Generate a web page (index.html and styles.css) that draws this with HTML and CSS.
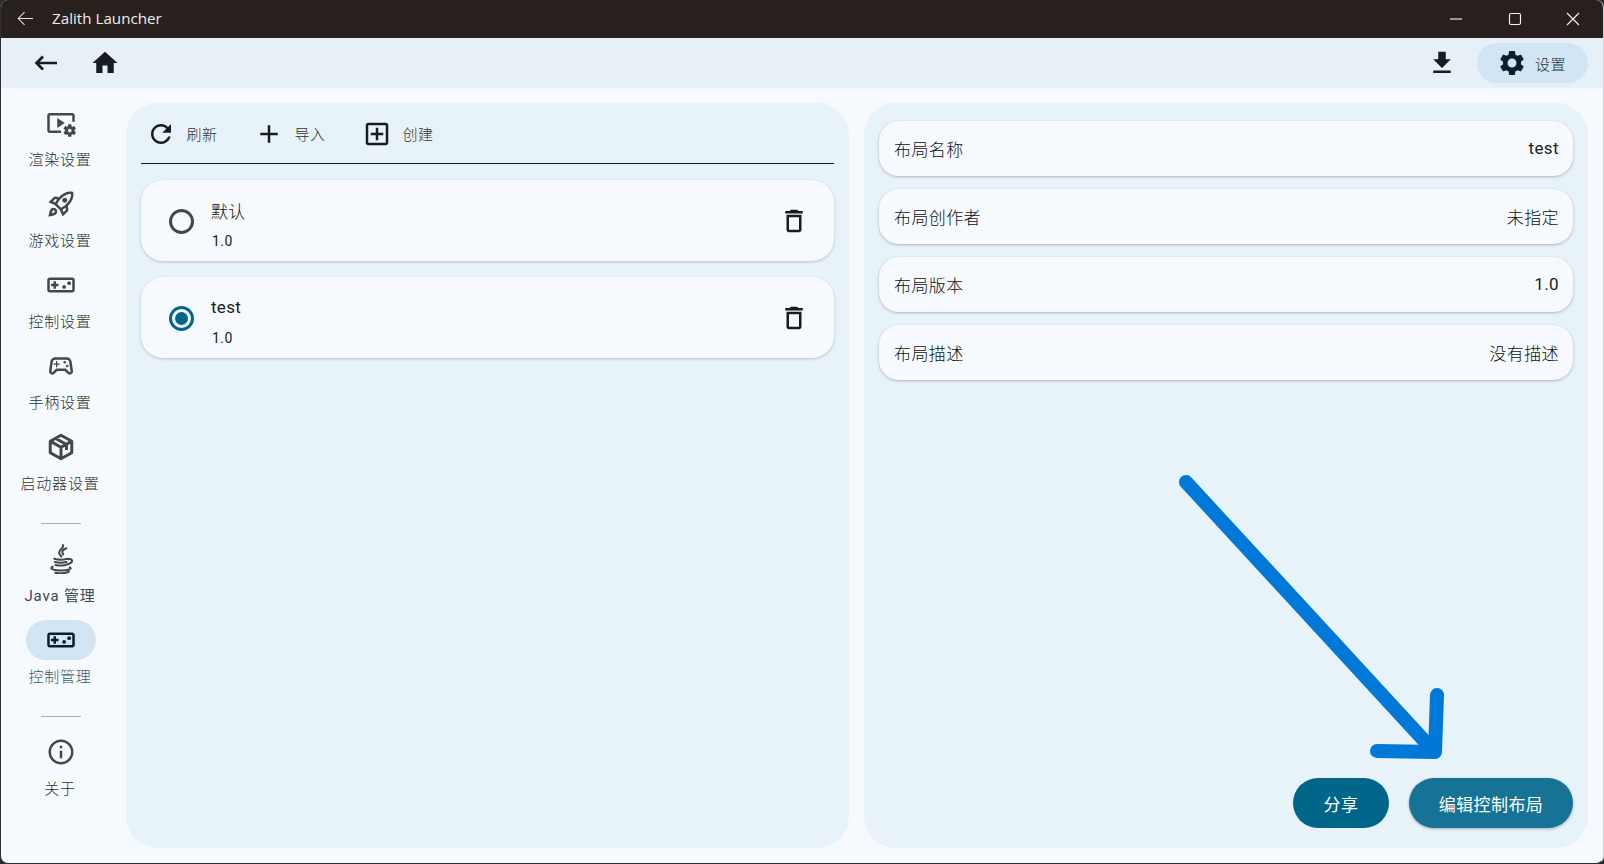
FILE: index.html
```html
<!DOCTYPE html>
<html lang="zh">
<head>
<meta charset="utf-8">
<title>Zalith Launcher</title>
<link rel="stylesheet" href="styles.css">
</head>
<body>
<div class="window">
  <header class="titlebar">
    <svg class="tb-back" viewBox="0 0 18 16"><path d="M17 8H1.5M8 1.2 1.2 8 8 14.8"/></svg>
    <span class="tb-title">Zalith Launcher</span>
    <div class="tb-controls">
      <svg class="tb-ctl" viewBox="0 0 14 14"><path d="M1 7h12"/></svg>
      <svg class="tb-ctl" viewBox="0 0 14 14"><rect x="1.5" y="1.5" width="11" height="11" rx="1.5"/></svg>
      <svg class="tb-ctl" viewBox="0 0 14 14"><path d="M1 1l12 12M13 1 1 13"/></svg>
    </div>
  </header>

  <div class="topbar">
    <svg class="back" viewBox="0 0 24 16"><path d="M23 8H2.5M9 1.5 2.5 8 9 14.5"/></svg>
    <svg class="icon home" viewBox="0 0 24 24"><path d="M10 20v-6h4v6h5v-8h3L12 3 2 12h3v8z"/></svg>
    <div class="spacer"></div>
    <svg class="icon download" viewBox="0 0 24 24"><path d="M19 9h-4V3H9v6H5l7 7 7-7zM5 18v2h14v-2H5z"/></svg>
    <div class="settings-pill">
      <svg class="icon" viewBox="0 0 24 24"><path d="M19.14 12.94c.04-.3.06-.61.06-.94 0-.32-.02-.64-.07-.94l2.03-1.58c.18-.14.23-.41.12-.61l-1.92-3.32c-.12-.22-.37-.29-.59-.22l-2.39.96c-.5-.38-1.03-.7-1.62-.94l-.36-2.54c-.04-.24-.24-.41-.48-.41h-3.84c-.24 0-.43.17-.47.41l-.36 2.54c-.59.24-1.13.57-1.62.94l-2.39-.96c-.22-.08-.47 0-.59.22L2.74 8.87c-.12.21-.08.47.12.61l2.03 1.58c-.05.3-.09.63-.09.94s.02.64.07.94l-2.03 1.58c-.18.14-.23.41-.12.61l1.92 3.32c.12.22.37.29.59.22l2.39-.96c.5.38 1.03.7 1.62.94l.36 2.54c.05.24.24.41.48.41h3.84c.24 0 .44-.17.47-.41l.36-2.54c.59-.24 1.13-.56 1.62-.94l2.39.96c.22.08.47 0 .59-.22l1.92-3.32c.12-.22.07-.47-.12-.61l-2.01-1.58zM12 15.6c-1.98 0-3.6-1.62-3.6-3.6s1.62-3.6 3.6-3.6 3.6 1.62 3.6 3.6-1.62 3.6-3.6 3.6z"/></svg>
      <span>设置</span>
    </div>
  </div>

  <div class="main">
    <nav class="sidebar">
      <div class="nav-item">
        <div class="nav-pill"><svg class="icon" viewBox="0 0 24 24"><path d="M3 6h18v5h2V6c0-1.1-.9-2-2-2H3c-1.1 0-2 .9-2 2v12c0 1.1.9 2 2 2h9v-2H3V6z"/><path d="M15 12 9 8v8z"/><path d="M22.71 18.43c.03-.29.04-.58.01-.86l1.07-.85c.1-.08.12-.21.06-.32l-1.03-1.79c-.06-.11-.19-.15-.31-.11l-1.28.5c-.23-.17-.48-.31-.75-.42l-.2-1.36c-.02-.13-.13-.22-.25-.22h-2.07c-.12 0-.23.09-.25.21l-.2 1.36c-.26.11-.51.26-.74.42l-1.28-.5c-.12-.05-.25 0-.31.11l-1.03 1.79c-.06.11-.04.24.06.32l1.07.86c-.03.29-.04.58-.01.86l-1.07.85c-.1.08-.12.21-.06.32l1.03 1.79c.06.11.19.15.31.11l1.27-.5c.23.17.48.31.75.42l.2 1.36c.02.12.12.21.25.21h2.07c.12 0 .23-.09.25-.21l.2-1.36c.26-.11.51-.26.74-.42l1.28.5c.12.05.25 0 .31-.11l1.03-1.79c.06-.11.04-.24-.06-.32l-1.06-.85zM19 19.5c-.83 0-1.5-.67-1.5-1.5s.67-1.5 1.5-1.5 1.5.67 1.5 1.5-.67 1.5-1.5 1.5z"/></svg></div>
        <span class="nav-label">渲染设置</span>
      </div>
      <div class="nav-item">
        <div class="nav-pill"><svg class="icon" viewBox="0 0 24 24"><path d="M6 15c-.83 0-1.58.34-2.12.88C2.7 17.06 2 22 2 22s4.94-.7 6.12-1.88c.54-.54.88-1.29.88-2.12 0-1.66-1.34-3-3-3zm.71 3.71c-.28.28-2.17.76-2.17.76s.47-1.88.76-2.17c.17-.19.42-.3.7-.3.55 0 1 .45 1 1 0 .28-.11.53-.29.71zm10.71-5.06c6.36-6.36 4.24-11.31 4.24-11.31S16.71.22 10.35 6.58l-2.49-.5c-.65-.13-1.33.08-1.81.55L2 10.69l5 2.14L11.17 17l2.14 5 4.05-4.05c.47-.47.68-1.15.55-1.8l-.49-2.5zM7.41 10.83l-1.91-.82 1.97-1.97 1.44.29c-.57.83-1.08 1.7-1.5 2.5zm6.58 7.67l-.82-1.91c.8-.42 1.67-.93 2.49-1.5l.29 1.44-1.96 1.97zM16 12.24c-1.32 1.32-3.38 2.4-4.04 2.73l-2.93-2.93c.32-.65 1.4-2.71 2.73-4.04 4.68-4.68 8.23-3.91 8.23-3.91s.69 3.55-3.99 8.15zM15 11c1.1 0 2-.9 2-2s-.9-2-2-2-2 .9-2 2 .9 2 2 2z"/></svg></div>
        <span class="nav-label">游戏设置</span>
      </div>
      <div class="nav-item">
        <div class="nav-pill"><svg class="icon" viewBox="0 0 24 24"><path fill-rule="evenodd" d="M21 6H3c-1.1 0-2 .9-2 2v8c0 1.1.9 2 2 2h18c1.1 0 2-.9 2-2V8c0-1.1-.9-2-2-2zm0 10H3V8h18v8z"/><path d="M6 15h2v-2h2v-2H8V9H6v2H4v2h2z"/><circle cx="14.5" cy="13.5" r="1.5"/><circle cx="18.5" cy="10.5" r="1.5"/></svg></div>
        <span class="nav-label">控制设置</span>
      </div>
      <div class="nav-item">
        <div class="nav-pill"><svg class="icon" viewBox="0 0 24 24"><path d="M21.58 16.09l-1.09-7.66C20.21 6.46 18.52 5 16.53 5H7.47C5.48 5 3.79 6.46 3.51 8.43l-1.09 7.66C2.2 17.63 3.39 19 4.94 19c.68 0 1.32-.27 1.8-.75L9 16h6l2.25 2.25c.48.48 1.13.75 1.8.75 1.56 0 2.75-1.37 2.53-2.91zm-2.1.72c-.08.09-.21.19-.43.19-.15 0-.29-.06-.39-.16L15.83 14H8.17l-2.83 2.84c-.1.1-.24.16-.39.16-.22 0-.35-.1-.43-.19-.08-.09-.16-.24-.14-.43l1.09-7.66C5.61 7.74 6.48 7 7.47 7h9.06c.99 0 1.86.74 1.99 1.72l1.09 7.66c.02.19-.06.34-.14.43z"/><path d="M9 8H8v2H6v1h2v2h1v-2h2v-1H9z"/><circle cx="17" cy="12" r="1"/><circle cx="15" cy="9" r="1"/></svg></div>
        <span class="nav-label">手柄设置</span>
      </div>
      <div class="nav-item">
        <div class="nav-pill"><svg class="icon stroke" viewBox="0 0 24 24"><path d="M12 2.6 20.6 7.4v9.2L12 21.4l-8.6-4.8V7.4zM3.6 7.5 12 12.2l8.4-4.7M12 12.2V21M7.8 5.1l8.6 4.9v4.4"/></svg></div>
        <span class="nav-label">启动器设置</span>
      </div>
      <div class="divider first"></div>
      <div class="nav-item">
        <div class="nav-pill"><svg class="icon java" viewBox="0 0 24 24"><path d="M13.5.8c1.6 2.6-4.4 4-2.8 7 .4.8 1 1.5 1.6 2.2M16.2 3.4c-2.4 1-4.2 2.4-2.4 5"/><path d="M6.6 11.8c3 .8 7.6.8 10.6 0M7 14.4c2.6.6 7 .6 9.4 0M7.6 16.8c2.4.5 6 .5 8.2 0M5.4 18.2c-3.4 1.6 1 3 6.6 3s9.4-1.2 7-2.6M7.4 23c3.4.6 8.4.4 11-.9M17.6 12.2c2.8-.8 4.2 1.2 2.4 2.8-.8.7-2 1.1-3.2 1.4"/></svg></div>
        <span class="nav-label latin-label">Java 管理</span>
      </div>
      <div class="nav-item active">
        <div class="nav-pill"><svg class="icon" viewBox="0 0 24 24"><path fill-rule="evenodd" d="M21 6H3c-1.1 0-2 .9-2 2v8c0 1.1.9 2 2 2h18c1.1 0 2-.9 2-2V8c0-1.1-.9-2-2-2zm0 10H3V8h18v8z"/><path d="M6 15h2v-2h2v-2H8V9H6v2H4v2h2z"/><circle cx="14.5" cy="13.5" r="1.5"/><circle cx="18.5" cy="10.5" r="1.5"/></svg></div>
        <span class="nav-label">控制管理</span>
      </div>
      <div class="divider second"></div>
      <div class="nav-item">
        <div class="nav-pill"><svg class="icon" viewBox="0 0 24 24"><path d="M11 7h2v2h-2zm0 4h2v6h-2zm1-9C6.48 2 2 6.48 2 12s4.48 10 10 10 10-4.48 10-10S17.52 2 12 2zm0 18c-4.41 0-8-3.59-8-8s3.59-8 8-8 8 3.59 8 8-3.59 8-8 8z"/></svg></div>
        <span class="nav-label">关于</span>
      </div>
    </nav>

    <section class="panel left-panel">
      <div class="toolbar">
        <div class="tool"><svg class="icon" viewBox="0 0 24 24"><path d="M17.65 6.35C16.2 4.9 14.21 4 12 4c-4.42 0-7.99 3.58-7.99 8s3.57 8 7.99 8c3.73 0 6.84-2.55 7.73-6h-2.08c-.82 2.33-3.04 4-5.65 4-3.31 0-6-2.69-6-6s2.69-6 6-6c1.66 0 3.14.69 4.22 1.78L13 11h7V4l-2.35 2.35z"/></svg><span>刷新</span></div>
        <div class="tool"><svg class="icon" viewBox="0 0 24 24"><path d="M19 13h-6v6h-2v-6H5v-2h6V5h2v6h6v2z"/></svg><span>导入</span></div>
        <div class="tool"><svg class="icon" viewBox="0 0 24 24"><path d="M19 3H5c-1.1 0-2 .9-2 2v14c0 1.1.9 2 2 2h14c1.1 0 2-.9 2-2V5c0-1.1-.9-2-2-2zm0 16H5V5h14v14zM11 17h2v-4h4v-2h-4V7h-2v4H7v2h4z"/></svg><span>创建</span></div>
      </div>
      <div class="list">
        <div class="layout-card">
          <span class="radio"></span>
          <div class="layout-text"><span class="layout-name">默认</span><span class="layout-ver">1.0</span></div>
          <svg class="icon trash" viewBox="0 0 24 24"><path d="M6 19c0 1.1.9 2 2 2h8c1.1 0 2-.9 2-2V7H6v12zM8 9h8v10H8V9zm7.5-5l-1-1h-5l-1 1H5v2h14V4z"/></svg>
        </div>
        <div class="layout-card">
          <span class="radio on"></span>
          <div class="layout-text"><span class="layout-name latin">test</span><span class="layout-ver">1.0</span></div>
          <svg class="icon trash" viewBox="0 0 24 24"><path d="M6 19c0 1.1.9 2 2 2h8c1.1 0 2-.9 2-2V7H6v12zM8 9h8v10H8V9zm7.5-5l-1-1h-5l-1 1H5v2h14V4z"/></svg>
        </div>
      </div>
    </section>

    <section class="panel right-panel">
      <div class="info-list">
        <div class="info-card"><span>布局名称</span><span class="latin-val">test</span></div>
        <div class="info-card"><span>布局创作者</span><span>未指定</span></div>
        <div class="info-card"><span>布局版本</span><span class="latin-val">1.0</span></div>
        <div class="info-card"><span>布局描述</span><span>没有描述</span></div>
      </div>
      <div class="actions">
        <div class="btn share">分享</div>
        <div class="btn edit">编辑控制布局</div>
      </div>
      <svg class="annotation" viewBox="0 0 724 745"><path d="M322 379 567 645"/><path d="M573 592 571 649 513 648"/></svg>
    </section>
  </div>
</div>
</body>
</html>
```

FILE: styles.css
```css
* { box-sizing: border-box; }
html, body { margin: 0; height: 100%; background: #2b2b2b; }
body { font-family: Roboto, "Noto Sans CJK SC", sans-serif; color: #191c1e; overflow: hidden; }
.window { height: 864px; width: 1604px; display: flex; flex-direction: column; background: #f6faff; border-radius: 8px; overflow: hidden; border: 1px solid #2f2f2f; border-top: 0; border-right-color: #d0d4d8; }
.titlebar { height: 38px; flex: none; background: #27201c; display: flex; align-items: center; color: #f1ede9; padding: 0 0 2px 16px; }
.tb-back { width: 17px; height: 15px; fill: none; stroke: #e6e2de; stroke-width: 1.1; margin-right: 18px; }
.tb-title { font-family: "Open Sans", sans-serif; font-size: 15.2px; }
.tb-controls { margin-left: auto; display: flex; align-items: center; gap: 44.5px; padding: 2px 23px 0 0; }
.tb-ctl { width: 14px; height: 14px; fill: none; stroke: #f4f0ec; stroke-width: 1.15; }

.icon { width: 30px; height: 30px; fill: currentColor; flex: none; display: block; }
.topbar { height: 50px; flex: none; background: #e7eff7; display: flex; align-items: center; padding: 0 15px 0 33px; color: #191c1e; }
.back { width: 24px; height: 16px; flex: none; fill: none; stroke: #191c1e; stroke-width: 2.6; }
.home { margin-left: 32px; }
.spacer { flex: 1; }
.download { margin-right: 20px; }
.settings-pill { width: 111px; height: 40px; border-radius: 20px; background: #d2e5f5; display: flex; align-items: center; gap: 8px; padding-left: 20px; font-size: 15px; font-weight: 300; letter-spacing: .5px; color: #2a3236; }
.settings-pill .icon { color: #07202c; }

.main { flex: 1; display: flex; padding: 15px 15px 15px 0; min-height: 0; }
.sidebar { width: 125px; flex: none; display: flex; flex-direction: column; align-items: center; padding-right: 5px; }
.nav-item { display: flex; flex-direction: column; align-items: center; height: 81px; flex: none; color: #40484c; }
.nav-pill { width: 70px; height: 40px; border-radius: 20px; display: flex; align-items: center; justify-content: center; }
.nav-label { font-size: 15px; font-weight: 300; color: #2a3236; line-height: 22px; margin: 6px 2px 0 0; letter-spacing: .8px; white-space: nowrap; }
.latin-label { font-weight: 400; color: #40484c; }
.active .nav-pill { background: #d2e5f5; color: #07202c; }
.active .nav-label { color: #43596a; }
.divider { width: 40px; height: 1px; background: #a9adb0; flex: none; margin-bottom: 15px; }
.divider.first { margin-top: 15px; }
.divider.second { margin-top: 15px; }
.stroke { fill: none; stroke: currentColor; stroke-width: 2.4; stroke-linejoin: round; }
.java { fill: none; stroke: currentColor; stroke-width: 1.6; stroke-linecap: round; }

.panel { background: #e7f2f9; border-radius: 32px; position: relative; display: flex; flex-direction: column; min-width: 0; }
.left-panel { width: 723px; padding: 0 15px; flex: none; margin-right: 15px; }
.right-panel { flex: 1; padding: 18px 15px 20px; }
.toolbar { height: 61px; flex: none; display: flex; align-items: center; gap: 36.5px; padding: 1px 0 0 5px; border-bottom: 1.5px solid #191c1e; }
.tool { display: flex; align-items: center; gap: 10.5px; font-size: 15px; font-weight: 300; letter-spacing: .5px; color: #2a3236; }
.tool .icon { color: #191c1e; }
.list { display: flex; flex-direction: column; gap: 16px; margin-top: 16px; }
.layout-card { height: 81px; border-radius: 22px; background: #f6faff; box-shadow: 0 1px 3px rgba(0,0,0,.2); display: flex; align-items: center; padding: 0 25px 0 28px; }
.radio { width: 25px; height: 25px; border-radius: 50%; border: 3px solid #40484c; flex: none; display: flex; align-items: center; justify-content: center; margin-top: 1px; }
.radio.on { border-color: #006689; }
.radio.on::after { content: ""; width: 13px; height: 13px; background: #006689; border-radius: 50%; }
.layout-text { display: flex; flex-direction: column; margin-left: 17px; padding-top: 10px; flex: 1; }
.layout-name { font-size: 17px; font-weight: 300; color: #0d1012; letter-spacing: .3px; line-height: 24px; }
.layout-name.latin { font-weight: 400; color: #191c1e; margin-top: -2px; margin-bottom: 2px; }
.layout-ver { font-size: 14px; letter-spacing: .5px; line-height: 20px; margin: 7px 0 0 1px; }
.trash { color: #191c1e; }

.info-list { display: flex; flex-direction: column; gap: 13px; }
.info-card { height: 55px; border-radius: 20px; background: #f6faff; box-shadow: 0 1px 3px rgba(0,0,0,.25); display: flex; align-items: center; justify-content: space-between; padding: 0 14px 0 15px; font-size: 17px; font-weight: 300; letter-spacing: .4px; color: #0d1012; }
.latin-val { margin-top: -2px; font-weight: 400; color: #191c1e; }
.actions { margin-top: auto; display: flex; justify-content: flex-end; gap: 20px; }
.btn { height: 50px; border-radius: 25px; color: #fff; font-size: 17px; display: flex; align-items: center; justify-content: center; letter-spacing: .4px; }
.share { width: 96px; background: #006689; }
.edit { width: 164px; background: #167396; box-shadow: 0 1px 3px rgba(0,0,0,.3); }
.annotation { position: absolute; left: 0; top: 0; width: 724px; height: 745px; fill: none; stroke: #0078d7; stroke-width: 14; stroke-linecap: round; stroke-linejoin: round; pointer-events: none; }
```
